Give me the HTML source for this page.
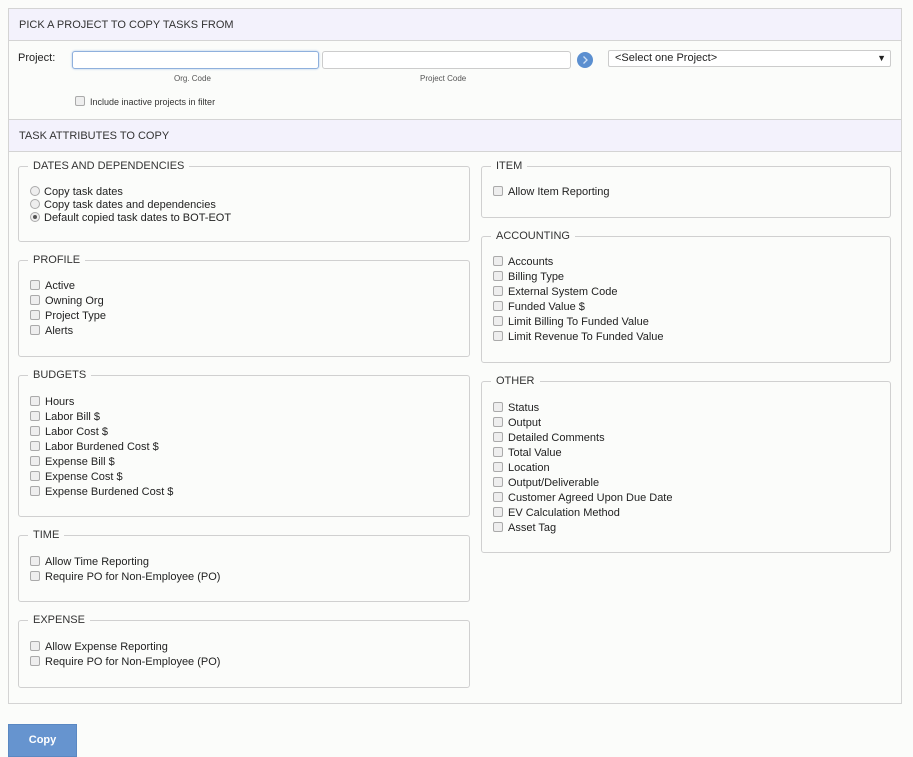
<!DOCTYPE html>
<html><head><style>
body{margin:0;width:913px;height:755px;background:#fbfcfa;font-family:"Liberation Sans",Arial,sans-serif;color:#222;position:relative;overflow:hidden;font-size:11px}
.a{position:absolute}
.panel{left:8px;top:8px;width:892px;height:694px;border:1px solid #d4d4d4;background:#fbfcfa}
.hdr{left:9px;width:892px;height:31px;background:#f3f2fc;border-bottom:1px solid #d4d4d4;border-top:1px solid #d4d4d4}
.hdr span{position:absolute;left:10px;top:10px;font-size:11px;color:#333}
.fs{border:1px solid #d0d0d0;border-radius:3px}
.lg{position:absolute;top:-7px;left:9px;background:#fbfcfa;padding:0 5px;font-size:11px;color:#333;line-height:13px}
.row{position:absolute;left:11px;height:15px;line-height:15px;white-space:nowrap}
.cb{display:inline-block;width:8px;height:8px;border:1px solid #aaa;border-radius:2px;background:#eee;vertical-align:-1px;margin-right:5px}
.rd{display:inline-block;width:8px;height:8px;border:1px solid #aaa;border-radius:50%;background:#eee;vertical-align:-1px;margin-right:4px;position:relative}
.rd.on::after{content:"";position:absolute;left:2px;top:2px;width:4px;height:4px;border-radius:50%;background:#555}
input{font-family:inherit}
</style></head><body>
<div class="a panel"></div>
<div class="a hdr" style="top:8px"><span>PICK A PROJECT TO COPY TASKS FROM</span></div>
<div class="a" style="left:18px;top:52px;font-size:11px">Project:</div>
<div class="a" style="left:72px;top:51px;width:245px;height:16px;border:1px solid #8fb0dd;border-radius:3px;background:#fff;box-shadow:0 0 2px #a8c4ea"></div>
<div class="a" style="left:322px;top:51px;width:247px;height:16px;border:1px solid #ccc;border-radius:3px;background:#fff"></div>
<div class="a" style="left:174px;top:74px;font-size:8px;color:#555">Org. Code</div>
<div class="a" style="left:420px;top:74px;font-size:8px;color:#555">Project Code</div>
<div class="a" style="left:577px;top:52px;width:16px;height:16px;border-radius:50%;background:#5b8fd0"><svg width="16" height="16"><path d="M6.5 4.5 L10 8 L6.5 11.5" stroke="#cfe0f5" stroke-width="1.3" fill="none"/></svg></div>
<div class="a" style="left:608px;top:50px;width:281px;height:15px;border:1px solid #ccc;border-radius:2px;background:#fff;font-size:11px;line-height:15px"><span style="position:absolute;left:6px">&lt;Select one Project&gt;</span><span style="position:absolute;right:4px;font-size:9px">&#9660;</span></div>
<div class="a" style="left:75px;top:96px;font-size:9px;color:#333"><span class="cb"></span>Include inactive projects in filter</div>
<div class="a hdr" style="top:119px"><span>TASK ATTRIBUTES TO COPY</span></div>

<div class="a fs" style="left:18px;top:166px;width:450px;height:74px"><div class="lg">DATES AND DEPENDENCIES</div>
<div class="row" style="top:18px"><span class="rd"></span>Copy task dates</div>
<div class="row" style="top:31px"><span class="rd"></span>Copy task dates and dependencies</div>
<div class="row" style="top:44px"><span class="rd on"></span>Default copied task dates to BOT-EOT</div></div>

<div class="a fs" style="left:18px;top:260px;width:450px;height:95px"><div class="lg">PROFILE</div>
<div class="row" style="top:18px"><span class="cb"></span>Active</div>
<div class="row" style="top:33px"><span class="cb"></span>Owning Org</div>
<div class="row" style="top:48px"><span class="cb"></span>Project Type</div>
<div class="row" style="top:63px"><span class="cb"></span>Alerts</div></div>

<div class="a fs" style="left:18px;top:375px;width:450px;height:140px"><div class="lg">BUDGETS</div>
<div class="row" style="top:19px"><span class="cb"></span>Hours</div>
<div class="row" style="top:34px"><span class="cb"></span>Labor Bill $</div>
<div class="row" style="top:49px"><span class="cb"></span>Labor Cost $</div>
<div class="row" style="top:64px"><span class="cb"></span>Labor Burdened Cost $</div>
<div class="row" style="top:79px"><span class="cb"></span>Expense Bill $</div>
<div class="row" style="top:94px"><span class="cb"></span>Expense Cost $</div>
<div class="row" style="top:109px"><span class="cb"></span>Expense Burdened Cost $</div></div>

<div class="a fs" style="left:18px;top:535px;width:450px;height:65px"><div class="lg">TIME</div>
<div class="row" style="top:19px"><span class="cb"></span>Allow Time Reporting</div>
<div class="row" style="top:34px"><span class="cb"></span>Require PO for Non-Employee (PO)</div></div>

<div class="a fs" style="left:18px;top:620px;width:450px;height:66px"><div class="lg">EXPENSE</div>
<div class="row" style="top:19px"><span class="cb"></span>Allow Expense Reporting</div>
<div class="row" style="top:34px"><span class="cb"></span>Require PO for Non-Employee (PO)</div></div>

<div class="a fs" style="left:481px;top:166px;width:408px;height:50px"><div class="lg">ITEM</div>
<div class="row" style="top:18px"><span class="cb"></span>Allow Item Reporting</div></div>

<div class="a fs" style="left:481px;top:236px;width:408px;height:125px"><div class="lg">ACCOUNTING</div>
<div class="row" style="top:18px"><span class="cb"></span>Accounts</div>
<div class="row" style="top:33px"><span class="cb"></span>Billing Type</div>
<div class="row" style="top:48px"><span class="cb"></span>External System Code</div>
<div class="row" style="top:63px"><span class="cb"></span>Funded Value $</div>
<div class="row" style="top:78px"><span class="cb"></span>Limit Billing To Funded Value</div>
<div class="row" style="top:93px"><span class="cb"></span>Limit Revenue To Funded Value</div></div>

<div class="a fs" style="left:481px;top:381px;width:408px;height:170px"><div class="lg">OTHER</div>
<div class="row" style="top:19px"><span class="cb"></span>Status</div>
<div class="row" style="top:34px"><span class="cb"></span>Output</div>
<div class="row" style="top:49px"><span class="cb"></span>Detailed Comments</div>
<div class="row" style="top:64px"><span class="cb"></span>Total Value</div>
<div class="row" style="top:79px"><span class="cb"></span>Location</div>
<div class="row" style="top:94px"><span class="cb"></span>Output/Deliverable</div>
<div class="row" style="top:109px"><span class="cb"></span>Customer Agreed Upon Due Date</div>
<div class="row" style="top:124px"><span class="cb"></span>EV Calculation Method</div>
<div class="row" style="top:139px"><span class="cb"></span>Asset Tag</div></div>

<div class="a" style="left:8px;top:724px;width:67px;height:31px;background:#6694cf;border:1px solid #5a88c2;color:#fff;font-weight:bold;font-size:11px;text-align:center;line-height:31px">Copy</div>
</body></html>
